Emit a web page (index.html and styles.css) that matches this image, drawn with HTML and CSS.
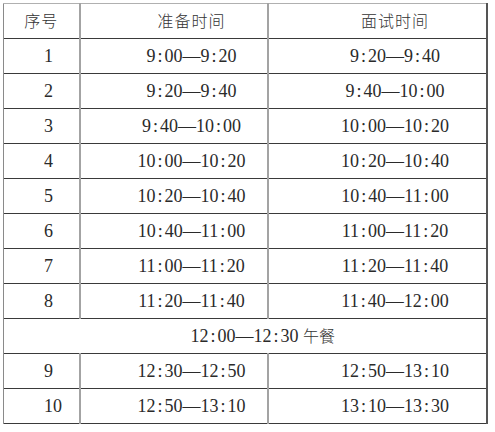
FILE: index.html
```html
<!DOCTYPE html>
<html lang="zh">
<head>
<meta charset="utf-8">
<link rel="stylesheet" href="styles.css">
</head>
<body>
<table class="sched">
  <colgroup>
    <col class="c-no">
    <col class="c-prep">
    <col class="c-int">
  </colgroup>
  <thead>
    <tr>
      <th class="no-h"><span class="zh">序号</span></th>
      <th class="t"><span class="zh sp">准备时间</span></th>
      <th class="t"><span class="zh sp">面试时间</span></th>
    </tr>
  </thead>
  <tbody>
    <tr><td class="no">1</td><td class="t">9<span class="c">:</span>00—9<span class="c">:</span>20</td><td class="t">9<span class="c">:</span>20—9<span class="c">:</span>40</td></tr>
    <tr><td class="no">2</td><td class="t">9<span class="c">:</span>20—9<span class="c">:</span>40</td><td class="t">9<span class="c">:</span>40—10<span class="c">:</span>00</td></tr>
    <tr><td class="no">3</td><td class="t">9<span class="c">:</span>40—10<span class="c">:</span>00</td><td class="t">10<span class="c">:</span>00—10<span class="c">:</span>20</td></tr>
    <tr><td class="no">4</td><td class="t">10<span class="c">:</span>00—10<span class="c">:</span>20</td><td class="t">10<span class="c">:</span>20—10<span class="c">:</span>40</td></tr>
    <tr><td class="no">5</td><td class="t">10<span class="c">:</span>20—10<span class="c">:</span>40</td><td class="t">10<span class="c">:</span>40—11<span class="c">:</span>00</td></tr>
    <tr><td class="no">6</td><td class="t">10<span class="c">:</span>40—11<span class="c">:</span>00</td><td class="t">11<span class="c">:</span>00—11<span class="c">:</span>20</td></tr>
    <tr><td class="no">7</td><td class="t">11<span class="c">:</span>00—11<span class="c">:</span>20</td><td class="t">11<span class="c">:</span>20—11<span class="c">:</span>40</td></tr>
    <tr><td class="no">8</td><td class="t">11<span class="c">:</span>20—11<span class="c">:</span>40</td><td class="t">11<span class="c">:</span>40—12<span class="c">:</span>00</td></tr>
    <tr><td class="t lunch" colspan="3">12<span class="c">:</span>00—12<span class="c">:</span>30 <span class="zh">午餐</span></td></tr>
    <tr><td class="no">9</td><td class="t">12<span class="c">:</span>30—12<span class="c">:</span>50</td><td class="t">12<span class="c">:</span>50—13<span class="c">:</span>10</td></tr>
    <tr><td class="no">10</td><td class="t">12<span class="c">:</span>50—13<span class="c">:</span>10</td><td class="t">13<span class="c">:</span>10—13<span class="c">:</span>30</td></tr>
  </tbody>
</table>
</body>
</html>
```
FILE: styles.css
```css
html, body {
  margin: 0;
  padding: 0;
  background: #ffffff;
}
body {
  padding: 3px 0 0 3px;
  font-family: "Liberation Serif", "Noto Sans CJK SC", serif;
  font-size: 18px;
  color: #2a2a2a;
}
.sched {
  border-collapse: collapse;
  table-layout: fixed;
  width: 483px;
  border-top: 1px solid #b0b0b0;
  border-left: 1px solid #8a8a8a;
  border-right: 2px solid #555;
  border-bottom: 1px solid #3a3a3a;
}
.c-no { width: 76px; }
.c-prep { width: 188px; }
.c-int { width: 219px; }
.sched th, .sched td {
  height: 34px;
  padding: 0;
  font-weight: normal;
  line-height: 1;
  border-top: 1px solid #3a3a3a;
  border-left: 2px solid #a3a3a3;
  white-space: nowrap;
}
.sched thead th { border-top: 1px solid #b0b0b0; }
.sched tr > :first-child { border-left: 1px solid #8a8a8a; }
.zh {
  font-family: "Noto Sans CJK SC", sans-serif;
  font-size: 16px;
  font-weight: 300;
  color: #333;
}
.sp { letter-spacing: 1px; }
.no-h {
  text-align: center;
  padding-right: 4px;
}
.no-h .zh { letter-spacing: 1px; }
.no {
  text-align: left;
  padding-left: 40px !important;
}
.t {
  text-align: center;
  padding-left: 36px !important;
}
.c {
  display: inline-block;
  width: 9px;
  text-align: center;
}
```
